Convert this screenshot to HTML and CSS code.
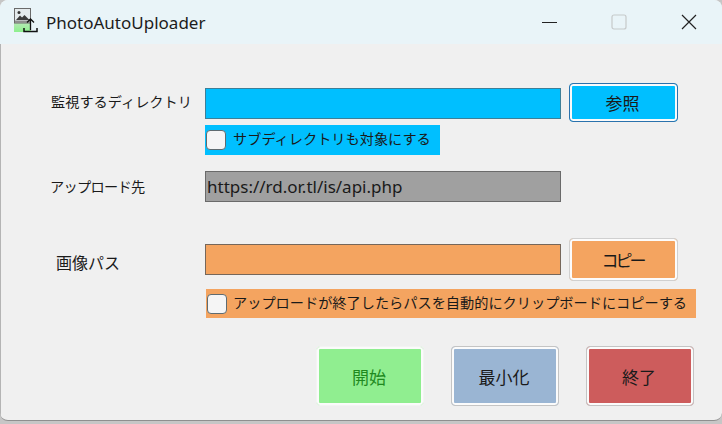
FILE: index.html
```html
<!DOCTYPE html>
<html lang="ja">
<head>
<meta charset="utf-8">
<title>PhotoAutoUploader</title>
<link rel="stylesheet" href="styles.css">
</head>
<body>
<div class="window">
  <header class="titlebar">
    <svg class="app-icon" width="26" height="28" viewBox="0 0 26 28">
      <defs>
        <linearGradient id="glow" x1="0" y1="0" x2="0" y2="1">
          <stop offset="0" stop-color="#b5e8b5"/>
          <stop offset="1" stop-color="#8df08d"/>
        </linearGradient>
      </defs>
      <rect x="0" y="15" width="17" height="9" fill="url(#glow)"/>
      <rect x="0.5" y="0.5" width="16" height="14.500" fill="#e4eaec" stroke="#6a6a6a" stroke-width="1"/>
      <rect x="1" y="12.500" width="15" height="2.500" fill="#8e8e8e"/>
      <circle cx="5" cy="4.500" r="1.500" fill="#333"/>
      <path d="M2 12l4-4.500 2 2 2.500-2.500 5 5z" fill="#3c3c3c"/>
      <path d="M10 20v3.500h13V20" fill="none" stroke="#111" stroke-width="1.500"/>
      <path d="M16.500 22V11M13 14.500l3.500-3.500 3.500 3.500" fill="none" stroke="#111" stroke-width="1.300"/>
    </svg>
    <span class="app-title">PhotoAutoUploader</span>
    <div class="window-controls">
      <svg class="ctl ctl-min" width="16" height="16" viewBox="0 0 16 16"><path d="M1 8.500h15" stroke="#222" stroke-width="1"/></svg>
      <svg class="ctl ctl-max" width="16" height="16" viewBox="0 0 16 16"><rect x="1" y="1" width="14" height="14" rx="2" fill="none" stroke="#c6c9ca" stroke-width="1.200"/></svg>
      <svg class="ctl ctl-close" width="16" height="16" viewBox="0 0 16 16"><path d="M1 1l14 14M15 1L1 15" stroke="#222" stroke-width="1.200"/></svg>
    </div>
  </header>

  <main class="content">
    <div class="row row-dir">
      <label class="label label-dir">監視するディレクトリ</label>
      <div class="field field-blue"></div>
      <button class="btn btn-browse">参照</button>
    </div>
    <label class="check check-blue">
      <span class="box"></span>
      <span class="check-text">サブディレクトリも対象にする</span>
    </label>

    <div class="row row-url">
      <label class="label label-url">アップロード先</label>
      <div class="field field-gray">https://rd.or.tl/is/api.php</div>
    </div>

    <div class="row row-path">
      <label class="label label-path">画像パス</label>
      <div class="field field-orange"></div>
      <button class="btn btn-copy">コピー</button>
    </div>
    <label class="check check-orange">
      <span class="box box-orange"></span>
      <span class="check-text">アップロードが終了したらパスを自動的にクリップボードにコピーする</span>
    </label>

    <div class="actions">
      <button class="btn btn-start">開始</button>
      <button class="btn btn-min">最小化</button>
      <button class="btn btn-exit">終了</button>
    </div>
  </main>
</div>
</body>
</html>
```

FILE: styles.css
```css
* { box-sizing: border-box; }
html, body { margin: 0; padding: 0; }
body {
  width: 722px;
  height: 424px;
  overflow: hidden;
  background: #c6c6c6;
  font-family: "Noto Sans CJK JP", "Noto Sans", sans-serif;
  font-size: 14.2px;
  color: #1a1a1a;
}
.window {
  height: 421px;
  background: #f0f0f0;
  border-bottom: 1px solid #8f8f8f;
  border-radius: 8px;
  overflow: hidden;
}
.titlebar {
  height: 44px;
  background: #e9f4f8;
  display: flex;
  align-items: center;
}
.app-icon { margin-left: 14px; flex: none; }
.app-title {
  margin-left: 6px;
  font-family: "Noto Sans", sans-serif;
  font-size: 17px;
  color: #1c1c1c;
}
.window-controls {
  margin-left: auto;
  display: flex;
  align-items: center;
  gap: 54px;
  padding-right: 25px;
}
.ctl { display: block; }
.content {
  display: flex;
  flex-direction: column;
  height: 376px;
  box-shadow: inset 1px 0 0 #b4b4b4;
}
.row { display: flex; align-items: center; }
.label { width: 205px; flex: none; }
.label-dir { padding: 0 0 4px 51px; }
.label-url { padding: 0 0 2px 50px; letter-spacing: -0.7px; }
.label-path { padding: 4px 0 0 56px; font-size: 16px; }
.field {
  width: 356px;
  height: 31px;
  border: 1px solid #6a6a6a;
  flex: none;
}
.field-blue { background: #00bfff; border-color: #3d7f98; margin-top: 1px; }
.field-gray {
  background: #a0a0a0;
  font-family: "Noto Sans", sans-serif;
  font-size: 17px;
  line-height: 29px;
  padding-left: 1px;
}
.field-orange { background: #f4a460; border-color: #76675a; }
.btn {
  font: inherit;
  font-size: 17px;
  color: #1a1a1a;
  padding: 0 2px 0 0;
  border-radius: 4px;
  flex: none;
}
.row-dir { margin-top: 39px; height: 39px; }
.btn-browse {
  margin-left: 8px;
  width: 109px;
  height: 39px;
  background: #00bfff;
  border: 1px solid #2a72ad;
  box-shadow: inset 0 0 0 2px #fafafa;
}
.check {
  display: flex;
  align-items: center;
  gap: 7px;
}
.check-text { padding-bottom: 4px; }
.check-blue {
  margin: 3px 0 0 205px;
  width: 235px;
  height: 30px;
  background: #00bfff;
  padding-left: 1px;
}
.box {
  width: 20px;
  height: 20px;
  background: #f5f5f5;
  border: 1px solid #5f6b70;
  border-radius: 4px;
  flex: none;
}
.row-url { margin-top: 16px; }
.row-path { margin-top: 36px; height: 43px; }
.btn-copy {
  margin-left: 8px;
  width: 109px;
  height: 43px;
  background: #f4a460;
  border: 1px solid #d0d0d0;
  box-shadow: inset 0 0 0 2px #fcfcfc;
  letter-spacing: -3px;
}
.check-orange {
  margin: 8px 0 0 206px;
  width: 490px;
  height: 29px;
  background: #f4a460;
  padding-left: 1px;
  gap: 6px;
}
.actions {
  display: flex;
  margin: 28px 0 0 316px;
  gap: 27px;
}
.btn-start,
.btn-min,
.btn-exit {
  width: 108px;
  height: 60px;
  border: 1px solid #c4c4c4;
  box-shadow: inset 0 0 0 2px #fbfbfb;
}
.btn-start {
  background: #90ee90;
  color: #1f8a1f;
  border-color: #f4f4f4;
}
.btn-min { background: #9ab5d3; }
.btn-exit { background: #cd5c5c; }
```
